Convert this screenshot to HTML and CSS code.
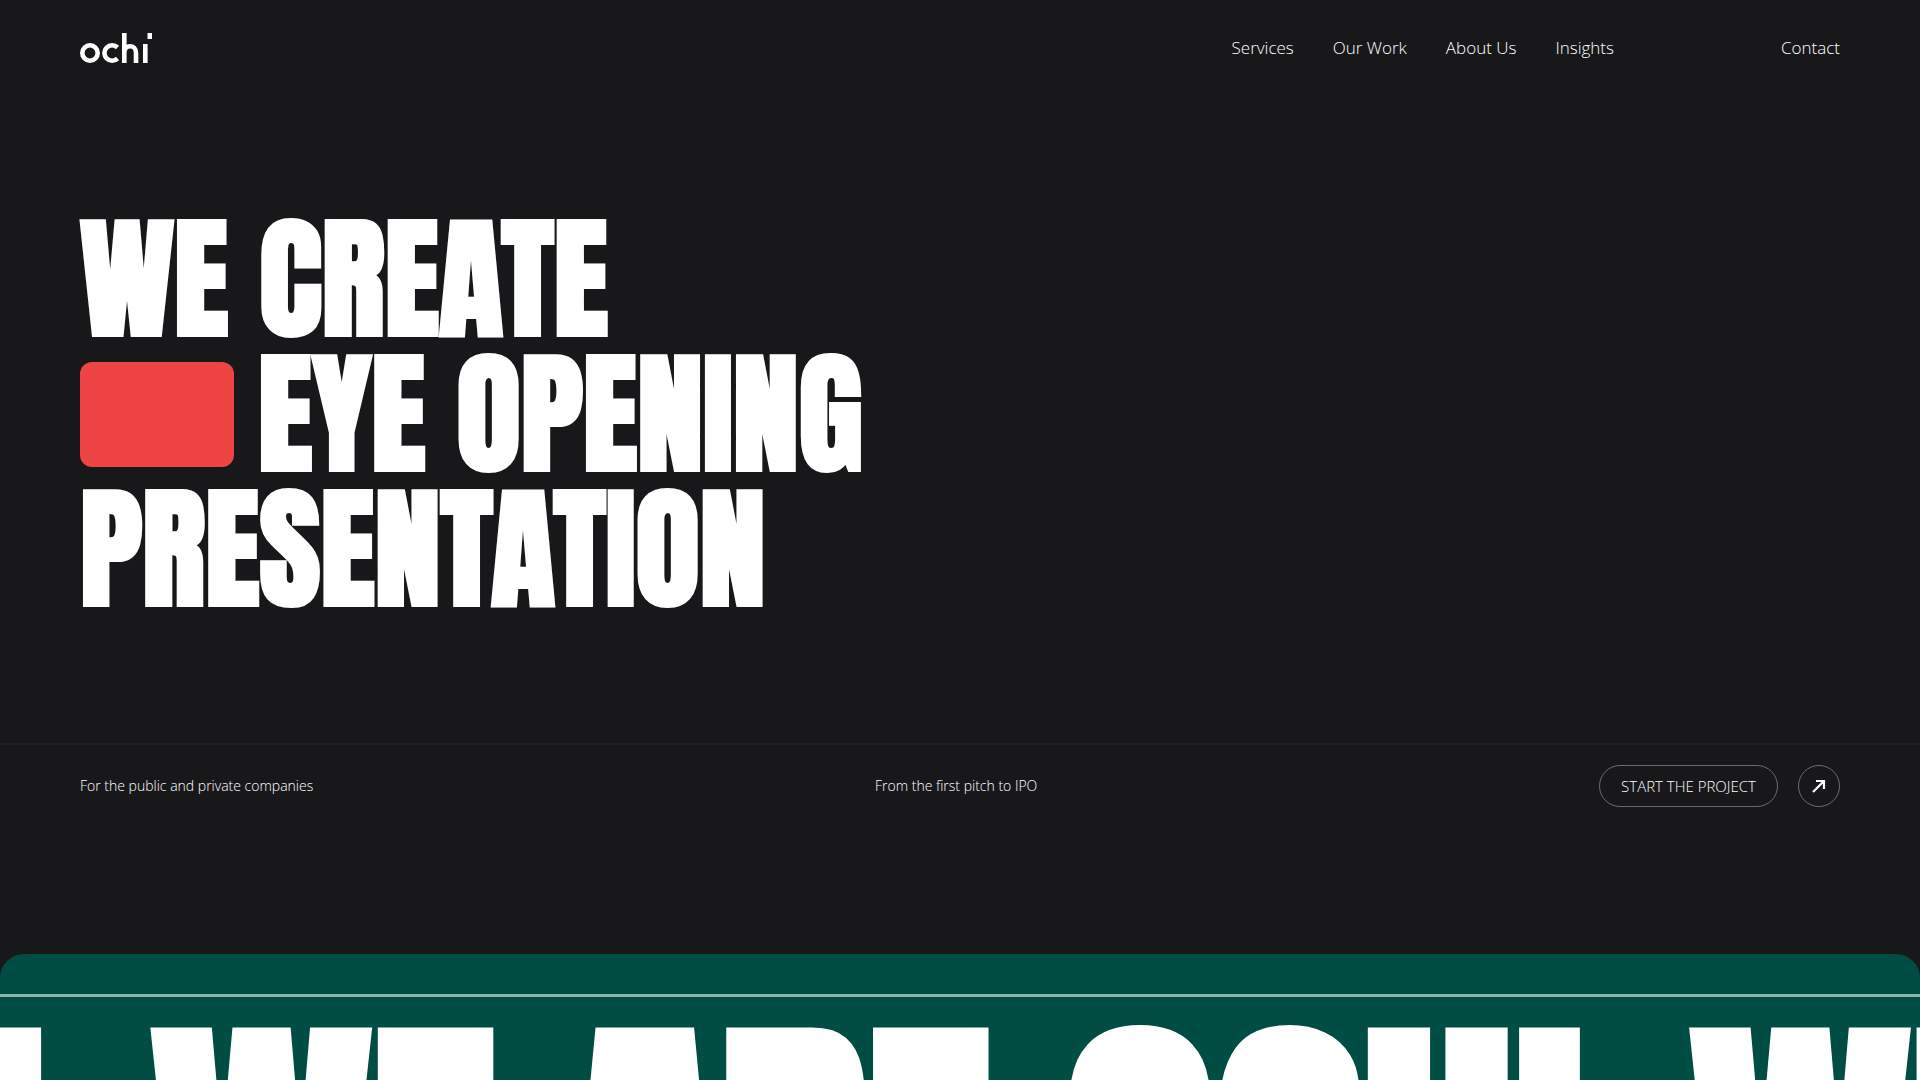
FILE: index.html
```
<!DOCTYPE html>
<html lang="en">
<head>
<meta charset="utf-8">
<meta name="viewport" content="width=device-width, initial-scale=1">
<title>Ochi</title>
<link rel="stylesheet" href="styles.css">
</head>
<body>
<div class="page">
  <header class="header">
    <a class="logo" href="#" aria-label="ochi">
      <svg width="72" height="30" viewBox="0 0 72 30" fill="none" stroke="currentColor" stroke-width="4.6" aria-hidden="true">
        <circle cx="10" cy="20" r="7.700"/>
        <path d="M37.500 14.500A7.700 7.700 0 1 0 37.500 25.500"/>
        <path d="M44.300 0V30M44.300 20C44.300 11 56 11 56 20V30"/>
        <path d="M65.300 11V30"/>
        <path d="M67.500 3H72" stroke-width="6"/>
      </svg>
    </a>
    <nav class="nav">
      <a href="#">Services</a>
      <a href="#">Our Work</a>
      <a href="#">About Us</a>
      <a href="#">Insights</a>
      <a class="nav-contact" href="#">Contact</a>
    </nav>
  </header>
  <main>
    <section class="hero">
      <h1 class="title">
        <span class="title-line">We create</span>
        <span class="title-line"><span class="title-box"></span>Eye opening</span>
        <span class="title-line">Presentation</span>
      </h1>
    </section>
    <section class="strip">
      <p>For the public and private companies</p>
      <p>From the first pitch to IPO</p>
      <div class="start">
        <button class="pill" type="button">START THE PROJECT</button>
        <button class="round" type="button" aria-label="Open">
          <svg width="14" height="14" viewBox="0 0 14 14" fill="none" stroke="currentColor" stroke-width="2.2" aria-hidden="true"><path d="M1 13L12 2M4 2H12V10"/></svg>
        </button>
      </div>
    </section>
    <section class="banner">
      <div class="marquee">
        <span>We are ochi</span>
        <span>We are ochi</span>
        <span>We are ochi</span>
      </div>
    </section>
  </main>
</div>
</body>
</html>
```
FILE: styles.css
```
* { box-sizing: border-box; margin: 0; padding: 0; }

body {
  background: #18181b;
  color: #fff;
  font-family: "Open Sans", "Noto Sans", sans-serif;
  font-weight: 300;
}

a { color: inherit; text-decoration: none; }

.page { height: 100vh; overflow: hidden; }

.header {
  display: flex;
  justify-content: space-between;
  align-items: center;
  height: 95px;
  padding: 0 80px;
}

.logo svg { display: block; }

.nav {
  display: flex;
  gap: 39px;
  font-size: 17px;
  line-height: 24px;
}

.nav-contact { margin-left: 128px; }

.hero { padding: 117px 80px 126px; }

.title {
  font-family: "Anton", "Roboto Condensed", sans-serif;
  font-size: 132px;
  font-weight: 900;
  line-height: 135px;
  text-transform: uppercase;
}

.title-line {
  display: flex;
  align-items: center;
}

.title-box {
  width: 154px;
  height: 105px;
  margin-right: 24px;
  border-radius: 12px;
  background: #ef4444;
}

.strip {
  display: flex;
  justify-content: space-between;
  align-items: center;
  padding: 20px 80px;
  border-top: 2px solid #202023;
  font-size: 14px;
  line-height: 24px;
}

.start {
  display: flex;
  gap: 20px;
}

.pill,
.round {
  height: 42px;
  border: 1px solid #6a6a72;
  border-radius: 21px;
  background: transparent;
  color: inherit;
  font: inherit;
}

.pill {
  padding: 0 21px;
  font-size: 15px;
}

.round {
  display: grid;
  place-items: center;
  width: 42px;
}

.banner {
  margin-top: 127px;
  padding: 40px 0 80px;
  border-radius: 24px 24px 0 0;
  background: #004d43;
}

.marquee {
  display: flex;
  justify-content: center;
  gap: 106px;
  padding-right: 184px;
  overflow: hidden;
  border-top: 3px solid #8fb0ab;
  border-bottom: 3px solid #8fb0ab;
  font-family: "Anton", "Roboto Condensed", sans-serif;
  font-size: 308px;
  font-weight: 900;
  line-height: 340px;
  text-transform: uppercase;
  white-space: nowrap;
}
```
